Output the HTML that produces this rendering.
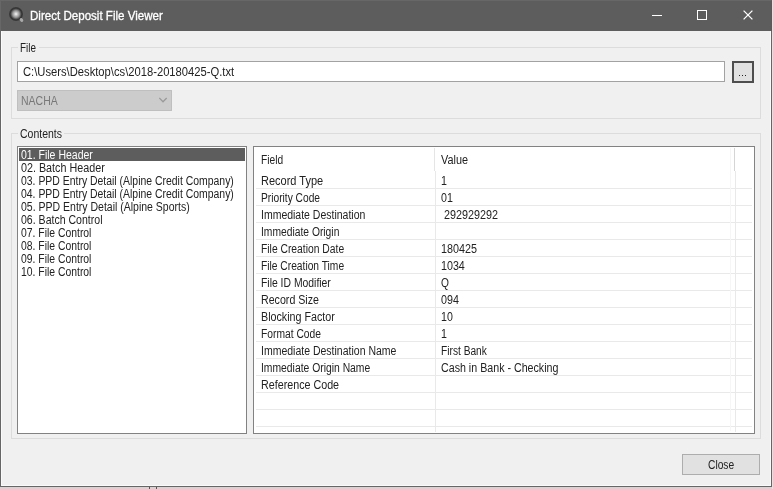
<!DOCTYPE html>
<html><head><meta charset="utf-8">
<style>
*{margin:0;padding:0;box-sizing:border-box}
body{filter:grayscale(1)}
html,body{width:773px;height:489px;overflow:hidden;background:#d4d4d4;font-family:"Liberation Sans",sans-serif}
.a{position:absolute}
.t{white-space:pre;position:absolute;line-height:1;font-size:12px;color:#222}
.gb{position:absolute;border:1px solid #dcdcdc}
.lbl{background:#f0f0f0;padding:0 2px}


</style></head><body>
<div class="a" style="left:0;top:0;width:772px;height:487px;background:#f0f0f0;border:1px solid #666;border-top:none"></div>
<div class="a" style="left:1px;top:31px;width:770px;height:455px;border:1px solid #fafafa;border-top:none"></div>
<div class="a" style="left:772px;top:0;width:1px;height:489px;background:#e2e2e2"></div>
<div class="a" style="left:0;top:0;width:772px;height:31px;background:#5d5d5d;border-top:1px solid #676767;border-left:1px solid #676767;border-right:1px solid #5a5a5a"></div>
<div class="a" style="left:149px;top:487px;width:1px;height:2px;background:#555"></div>
<div class="a" style="left:156px;top:487px;width:1px;height:2px;background:#555"></div>
<div class="a" style="left:9px;top:7px;width:14px;height:14px;border-radius:50%;background:radial-gradient(circle closest-side at 50% 50%,#f6f6f6 0,#c8c8c8 22%,#909090 50%,#5a5a5a 68%,#343434 82%,#3a3a3a 100%)"></div>
<div class="a" style="left:20px;top:18px;width:3px;height:4px;background:#aaa;transform:rotate(-35deg);border-radius:1.5px"></div>
<div class="t " style="left:30px;top:10px;transform:scaleX(0.9641);transform-origin:0 0;color:#fff;-webkit-text-stroke:0.3px #fff">Direct Deposit File Viewer</div>
<div class="a" style="left:652px;top:15px;width:10px;height:1px;background:#fff"></div>
<div class="a" style="left:697px;top:10px;width:10px;height:10px;border:1px solid #fff"></div>
<svg class="a" style="left:743px;top:10px" width="10" height="10" viewBox="0 0 10 10"><path d="M0.6 0.6L9.4 9.4M9.4 0.6L0.6 9.4" stroke="#fff" stroke-width="1.3"/></svg>
<div class="gb" style="left:11px;top:47px;width:750px;height:72px"></div>
<div class="a" style="left:18px;top:44px;width:21px;height:6px;background:#f0f0f0"></div>
<div class="t " style="left:20px;top:42px;transform:scaleX(0.8224);transform-origin:0 0;">File</div>
<div class="a" style="left:17px;top:61px;width:708px;height:21px;background:#fff;border:1px solid #a2a2a2"></div>
<div class="t " style="left:23px;top:66px;transform:scaleX(0.9339);transform-origin:0 0;">C:\Users\Desktop\cs\2018-20180425-Q.txt</div>
<div class="a" style="left:732px;top:61px;width:22px;height:22px;background:#e1e1e1;border:2px solid #4e4e4e"></div>
<div class="a" style="left:739px;top:75px;width:1px;height:1px;background:#222"></div>
<div class="a" style="left:742px;top:75px;width:1px;height:1px;background:#222"></div>
<div class="a" style="left:745px;top:75px;width:1px;height:1px;background:#222"></div>
<div class="a" style="left:17px;top:90px;width:155px;height:21px;background:#cccccc;border:1px solid #bfbfbf"></div>
<div class="t " style="left:21px;top:95px;transform:scaleX(0.8743);transform-origin:0 0;color:#787878">NACHA</div>
<svg class="a" style="left:159px;top:97px" width="9" height="7" viewBox="0 0 9 7"><path d="M0.3 1L4 4.8L7.7 1" stroke="#9a9a9a" fill="none" stroke-width="1.3"/></svg>
<div class="gb" style="left:11px;top:133px;width:750px;height:306px"></div>
<div class="a" style="left:18px;top:130px;width:46px;height:6px;background:#f0f0f0"></div>
<div class="t " style="left:20px;top:128px;transform:scaleX(0.8744);transform-origin:0 0;">Contents</div>
<div class="a" style="left:17px;top:146px;width:230px;height:288px;background:#fff;border:1px solid #828282"></div>
<div class="a" style="left:19px;top:148px;width:226px;height:13px;background:#5d5d5d"></div>
<div class="t li" style="left:21px;top:149px;transform:scaleX(0.8759);transform-origin:0 0;color:#fff">01. File Header</div>
<div class="t li" style="left:21px;top:162px;transform:scaleX(0.8965);transform-origin:0 0;color:#222">02. Batch Header</div>
<div class="t li" style="left:21px;top:175px;transform:scaleX(0.8695);transform-origin:0 0;color:#222">03. PPD Entry Detail (Alpine Credit Company)</div>
<div class="t li" style="left:21px;top:188px;transform:scaleX(0.8695);transform-origin:0 0;color:#222">04. PPD Entry Detail (Alpine Credit Company)</div>
<div class="t li" style="left:21px;top:201px;transform:scaleX(0.8752);transform-origin:0 0;color:#222">05. PPD Entry Detail (Alpine Sports)</div>
<div class="t li" style="left:21px;top:214px;transform:scaleX(0.8789);transform-origin:0 0;color:#222">06. Batch Control</div>
<div class="t li" style="left:21px;top:227px;transform:scaleX(0.8654);transform-origin:0 0;color:#222">07. File Control</div>
<div class="t li" style="left:21px;top:240px;transform:scaleX(0.8654);transform-origin:0 0;color:#222">08. File Control</div>
<div class="t li" style="left:21px;top:253px;transform:scaleX(0.8654);transform-origin:0 0;color:#222">09. File Control</div>
<div class="t li" style="left:21px;top:266px;transform:scaleX(0.8654);transform-origin:0 0;color:#222">10. File Control</div>
<div class="a" style="left:253px;top:146px;width:502px;height:288px;background:#fff;border:1px solid #828282"></div>
<div class="a" style="left:434px;top:148px;width:1px;height:23px;background:#e5e5e5"></div>
<div class="a" style="left:734px;top:148px;width:1px;height:23px;background:#d5d5d5"></div>
<div class="a" style="left:256px;top:188px;width:496px;height:1px;background:#e9e9e9"></div>
<div class="a" style="left:256px;top:205px;width:496px;height:1px;background:#e9e9e9"></div>
<div class="a" style="left:256px;top:222px;width:496px;height:1px;background:#e9e9e9"></div>
<div class="a" style="left:256px;top:239px;width:496px;height:1px;background:#e9e9e9"></div>
<div class="a" style="left:256px;top:256px;width:496px;height:1px;background:#e9e9e9"></div>
<div class="a" style="left:256px;top:273px;width:496px;height:1px;background:#e9e9e9"></div>
<div class="a" style="left:256px;top:290px;width:496px;height:1px;background:#e9e9e9"></div>
<div class="a" style="left:256px;top:307px;width:496px;height:1px;background:#e9e9e9"></div>
<div class="a" style="left:256px;top:324px;width:496px;height:1px;background:#e9e9e9"></div>
<div class="a" style="left:256px;top:341px;width:496px;height:1px;background:#e9e9e9"></div>
<div class="a" style="left:256px;top:358px;width:496px;height:1px;background:#e9e9e9"></div>
<div class="a" style="left:256px;top:375px;width:496px;height:1px;background:#e9e9e9"></div>
<div class="a" style="left:256px;top:392px;width:496px;height:1px;background:#e9e9e9"></div>
<div class="a" style="left:256px;top:409px;width:496px;height:1px;background:#e9e9e9"></div>
<div class="a" style="left:256px;top:426px;width:496px;height:1px;background:#e9e9e9"></div>
<div class="a" style="left:435px;top:171px;width:1px;height:261px;background:#e9e9e9"></div>
<div class="a" style="left:735px;top:171px;width:1px;height:261px;background:#e9e9e9"></div>
<div class="a" style="left:730px;top:148px;width:1px;height:283px;background:#f6f6f6"></div>
<div class="t gr" style="left:261px;top:154px;transform:scaleX(0.8499);transform-origin:0 0;">Field</div>
<div class="t gr" style="left:441px;top:154px;transform:scaleX(0.9056);transform-origin:0 0;">Value</div>
<div class="t gr" style="left:261px;top:175px;transform:scaleX(0.9169);transform-origin:0 0;">Record Type</div>
<div class="t gr" style="left:441px;top:175px;transform:scaleX(0.8853);transform-origin:0 0;">1</div>
<div class="t gr" style="left:261px;top:192px;transform:scaleX(0.8505);transform-origin:0 0;">Priority Code</div>
<div class="t gr" style="left:441px;top:192px;transform:scaleX(0.8853);transform-origin:0 0;">01</div>
<div class="t gr" style="left:261px;top:209px;transform:scaleX(0.8736);transform-origin:0 0;">Immediate Destination</div>
<div class="t gr" style="left:441px;top:209px;transform:scaleX(0.8999);transform-origin:0 0;"> 292929292</div>
<div class="t gr" style="left:261px;top:226px;transform:scaleX(0.8576);transform-origin:0 0;">Immediate Origin</div>
<div class="t gr" style="left:261px;top:243px;transform:scaleX(0.8596);transform-origin:0 0;">File Creation Date</div>
<div class="t gr" style="left:441px;top:243px;transform:scaleX(0.8983);transform-origin:0 0;">180425</div>
<div class="t gr" style="left:261px;top:260px;transform:scaleX(0.8534);transform-origin:0 0;">File Creation Time</div>
<div class="t gr" style="left:441px;top:260px;transform:scaleX(0.8921);transform-origin:0 0;">1034</div>
<div class="t gr" style="left:261px;top:277px;transform:scaleX(0.8653);transform-origin:0 0;">File ID Modifier</div>
<div class="t gr" style="left:441px;top:277px;transform:scaleX(0.8482);transform-origin:0 0;">Q</div>
<div class="t gr" style="left:261px;top:294px;transform:scaleX(0.8869);transform-origin:0 0;">Record Size</div>
<div class="t gr" style="left:441px;top:294px;transform:scaleX(0.8921);transform-origin:0 0;">094</div>
<div class="t gr" style="left:261px;top:311px;transform:scaleX(0.8931);transform-origin:0 0;">Blocking Factor</div>
<div class="t gr" style="left:441px;top:311px;transform:scaleX(0.8833);transform-origin:0 0;">10</div>
<div class="t gr" style="left:261px;top:328px;transform:scaleX(0.8574);transform-origin:0 0;">Format Code</div>
<div class="t gr" style="left:441px;top:328px;transform:scaleX(0.8853);transform-origin:0 0;">1</div>
<div class="t gr" style="left:261px;top:345px;transform:scaleX(0.8751);transform-origin:0 0;">Immediate Destination Name</div>
<div class="t gr" style="left:441px;top:345px;transform:scaleX(0.8491);transform-origin:0 0;">First Bank</div>
<div class="t gr" style="left:261px;top:362px;transform:scaleX(0.8621);transform-origin:0 0;">Immediate Origin Name</div>
<div class="t gr" style="left:441px;top:362px;transform:scaleX(0.8892);transform-origin:0 0;">Cash in Bank - Checking</div>
<div class="t gr" style="left:261px;top:379px;transform:scaleX(0.8935);transform-origin:0 0;">Reference Code</div>
<div class="a" style="left:682px;top:454px;width:78px;height:21px;background:#e1e1e1;border:1px solid #adadad"></div>
<div class="t " style="left:708px;top:459px;transform:scaleX(0.8530);transform-origin:0 0;">Close</div>
</body></html>
